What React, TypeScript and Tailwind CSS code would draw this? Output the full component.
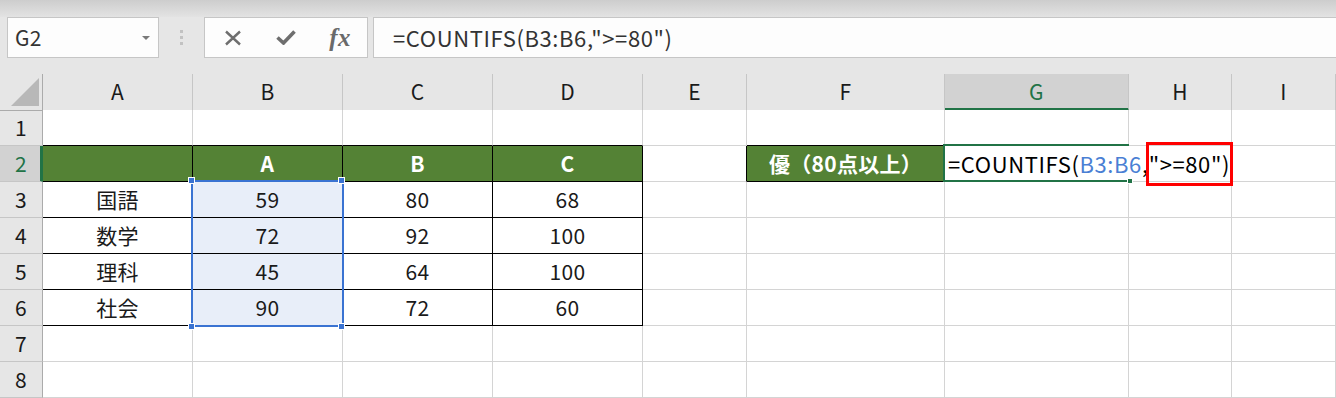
const font = { fontFamily: '"Noto Sans CJK JP", "Noto Sans", sans-serif' };

const colTemplate = "grid-cols-[43px_150px_150px_150px_150px_104px_198px_184px_103px_1fr]";
const letters = ["A", "B", "C", "D", "E", "F", "G", "H", "I"];

const subjects = ["国語", "数学", "理科", "社会"];
const scores = [
  [59, 80, 68],
  [72, 92, 100],
  [45, 64, 100],
  [90, 72, 60],
];

type Cell = { text?: string; bg: string; right: string; bottom: string };

function buildRow(r: number): Cell[] {
  const cells: Cell[] = [];
  for (let c = 1; c <= 9; c++) {
    let right = "border-r-[#d4d4d4]";
    let bottom = "border-b-[#d4d4d4]";
    let text: string | undefined;
    let bg = "bg-white";
    const inTable = r >= 2 && r <= 6 && c >= 1 && c <= 4;
    if (inTable) {
      right = "border-r-black";
      bottom = "border-b-black";
    }
    if (r === 1 && c <= 4) bottom = "border-b-black";
    if (r === 1 && c === 6) bottom = "border-b-black";
    if (r === 2 && c === 5) right = "border-r-black";
    if (r === 2 && c === 6) {
      right = "border-r-black";
      bottom = "border-b-black";
      bg = "bg-[#548235] font-bold text-white";
      text = "優（80点以上）";
    }
    if (r === 2 && c <= 4) {
      bg = "bg-[#548235] font-bold text-white";
      text = ["", "A", "B", "C"][c - 1];
    }
    if (r >= 3 && r <= 6 && c === 1) text = subjects[r - 3];
    if (r >= 3 && r <= 6 && c >= 2 && c <= 4) text = String(scores[r - 3][c - 2]);
    if (r >= 3 && r <= 6 && c === 2) bg = "bg-[#e8eef9]";
    cells.push({ text, bg, right, bottom });
  }
  return cells;
}

function Handle({ className }: { className: string }) {
  return <div className={`absolute h-[7px] w-[7px] border border-white bg-[#3a73d2] ${className}`} />;
}

export default function App() {
  const rows = [1, 2, 3, 4, 5, 6, 7, 8];

  return (
    <div className="h-[398px] w-[1336px] overflow-hidden bg-[#e6e6e6] text-[21px] tracking-[0.3px] text-[#1a1a1a]" style={font}>
      {/* top strip */}
      <div className="h-[17px] bg-gradient-to-b from-[#cdcdcd] to-[#e3e3e3]" />

      {/* name box + formula bar */}
      <div className="flex h-[41px] items-stretch">
        <div className="ml-[7px] flex w-[152px] items-center justify-between border border-[#c6c6c6] bg-[#fdfdfd] pl-[7px] pr-[8px]">
          <span className="text-[21px] text-[#333]">G2</span>
          <div className="h-0 w-0 border-x-[4px] border-t-[4px] border-x-transparent border-t-[#7a7a7a]" />
        </div>
        <div className="flex w-[45px] flex-col items-center justify-center gap-[3px]">
          <div className="h-[3px] w-[3px] bg-[#c2c2c2]" />
          <div className="h-[3px] w-[3px] bg-[#c2c2c2]" />
          <div className="h-[3px] w-[3px] bg-[#c2c2c2]" />
        </div>
        <div className="flex w-[164px] items-center border border-[#c6c6c6] bg-[#fdfdfd]">
          <div className="flex w-[54px] justify-center pl-[2px]">
            <svg width="18" height="16" viewBox="0 0 18 16">
              <path d="M2 1.5 L16 14.5 M16 1.5 L2 14.5" stroke="#6e6e6e" strokeWidth="2.4" fill="none" />
            </svg>
          </div>
          <div className="flex w-[54px] justify-center">
            <svg width="20" height="15" viewBox="0 0 20 15">
              <path d="M1.5 7.5 L7.5 13 L18.5 1.5" stroke="#6e6e6e" strokeWidth="3.6" fill="none" />
            </svg>
          </div>
          <div className="flex w-[54px] justify-center">
            <span className="text-[25px] font-semibold italic text-[#6a6a6a]" style={{ fontFamily: '"Liberation Serif", serif' }}>
              fx
            </span>
          </div>
        </div>
        <div className="ml-[5px] flex flex-1 items-center border-y border-l border-[#c6c6c6] bg-[#fdfdfd] pl-[19px]">
          <span className="text-[22px] tracking-[0.6px] text-[#333]">=COUNTIFS(B3:B6,"&gt;=80")</span>
        </div>
      </div>

      <div className="h-[16px]" />

      {/* sheet */}
      <div className="relative">
        {/* column headers */}
        <div className={`grid h-[36px] ${colTemplate}`}>
          <div className="border-b border-r border-b-[#ababab] border-r-[#ababab]">
            <svg width="42" height="35" viewBox="0 0 42 35">
              <polygon points="11,32 39,4 39,32" fill="#b8b8b8" />
            </svg>
          </div>
          {letters.map((l) =>
            l === "G" ? (
              <div key={l} className="flex items-center justify-center border-b-[3px] border-r border-b-[#217346] border-r-[#c6c6c6] bg-[#d2d2d2] pt-[2px] text-[#217346]">
                {l}
              </div>
            ) : (
              <div key={l} className="flex items-center justify-center border-b border-r border-b-[#ababab] border-r-[#c6c6c6]">
                {l}
              </div>
            )
          )}
        </div>

        {/* rows */}
        {rows.map((r) => {
          const cells = buildRow(r);
          return (
            <div key={r} className={`grid h-[36px] ${colTemplate}`}>
              {r === 2 ? (
                <div className="flex items-center justify-center border-b border-r-[3px] border-b-[#c6c6c6] border-r-[#217346] bg-[#d2d2d2] pl-[2px] text-[#217346]">
                  {r}
                </div>
              ) : (
                <div className="flex items-center justify-center border-b border-r border-b-[#c6c6c6] border-r-[#ababab]">
                  {r}
                </div>
              )}
              {cells.map((cell, i) => (
                <div key={i} className={`flex items-center justify-center border-b border-r ${cell.right} ${cell.bottom} ${cell.bg}`}>
                  {cell.text}
                </div>
              ))}
            </div>
          );
        })}

        {/* selection B3:B6 */}
        <div className="absolute left-[191px] top-[106px] h-[147px] w-[153px] border-2 border-[#3a73d2]" />
        <Handle className="left-[188px] top-[103px]" />
        <Handle className="left-[338px] top-[103px]" />
        <Handle className="left-[188px] top-[249px]" />
        <Handle className="left-[338px] top-[249px]" />

        {/* G2 editor */}
        <div className="absolute left-[943px] top-[70px] h-[38px] w-[186px] border-y-2 border-l-2 border-[#217346]">
          <div className="absolute left-[3px] top-0 flex h-[34px] items-center whitespace-nowrap bg-white pr-[2px] text-[22px] tracking-[0.6px] text-black">
            <span>=COUNTIFS(</span>
            <span className="text-[#4a7fd4]">B3:B6</span>
            <span>,</span>
            <span className="relative">
              &quot;&gt;=80&quot;)
              <span className="absolute -bottom-[6px] -left-[3px] -right-[3px] -top-[5px] border-[3px] border-[#ff0000]" />
            </span>
          </div>
          <div className="absolute -bottom-[4px] -right-[4px] h-[6px] w-[6px] border border-white bg-[#217346]" />
        </div>
      </div>
    </div>
  );
}
